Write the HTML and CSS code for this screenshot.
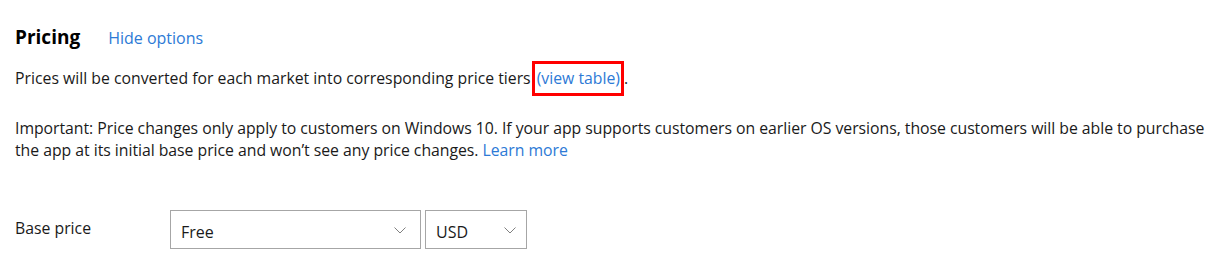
FILE: index.html
```html
<!DOCTYPE html>
<html lang="en">
<head>
<meta charset="utf-8">
<title>Pricing</title>
<link rel="stylesheet" href="styles.css">
</head>
<body>
<section class="pricing">
  <div class="header">
    <h2 class="title">Pricing</h2>
    <a class="link toggle" href="#">Hide options</a>
  </div>
  <p class="intro">Prices will be converted for each market into corresponding price tiers<span class="highlight"><a class="link" href="#">(view table)</a></span>.</p>
  <p class="note">Important: Price changes only apply to customers on Windows 10. If your app supports customers on earlier OS versions, those customers will be able to purchase the app at its initial base price and won’t see any price changes. <a class="link" href="#">Learn more</a></p>
  <div class="row">
    <span class="label">Base price</span>
    <div class="select select-price"><span>Free</span><svg class="chev" viewBox="0 0 12 7" width="12" height="7"><path d="M0.5 0.5 L6 6 L11.5 0.5" fill="none" stroke="#808080" stroke-width="1"/></svg></div>
    <div class="select select-cur"><span>USD</span><svg class="chev" viewBox="0 0 12 7" width="12" height="7"><path d="M0.5 0.5 L6 6 L11.5 0.5" fill="none" stroke="#808080" stroke-width="1"/></svg></div>
  </div>
</section>
</body>
</html>
```
FILE: styles.css
```css
html, body {
  margin: 0;
  padding: 0;
  background: #fff;
}
body {
  font-family: "Open Sans", "Noto Sans", sans-serif;
  color: #1a1a1a;
  font-size: 15.8px;
}
.pricing {
  padding: 24px 0 0 15px;
}
.header {
  display: flex;
  align-items: baseline;
  gap: 28px;
  height: 30px;
}
.title {
  margin: 0;
  font-size: 19px;
  font-weight: 700;
  color: #000;
}
.link {
  color: #2d7ad6;
  text-decoration: none;
}
.toggle {
  font-size: 16px;
}
.intro {
  margin: 13px 0 0 0;
  line-height: 22px;
}
.highlight {
  display: inline-block;
  border: 3px solid #f00;
  padding: 3px 1px 4px 2px;
  line-height: 22px;
  margin: -7px 0 -8px 1px;
}
.note {
  margin: 28px 0 0 0;
  line-height: 22px;
  letter-spacing: -0.03px;
}
.row {
  display: flex;
  align-items: center;
  margin-top: 49px;
}
.label {
  width: 155px;
  margin-top: -3px;
}
.select {
  box-sizing: border-box;
  height: 39px;
  border: 1px solid #a6a6a6;
  display: flex;
  align-items: center;
  justify-content: space-between;
  padding: 4px 14px 0 10px;
  font-size: 16px;
  color: #1a1a1a;
}
.select-price {
  width: 251px;
}
.select-cur {
  width: 102px;
  margin-left: 4px;
  padding-right: 10px;
}
.chev {
  margin-top: -2px;
}
```
